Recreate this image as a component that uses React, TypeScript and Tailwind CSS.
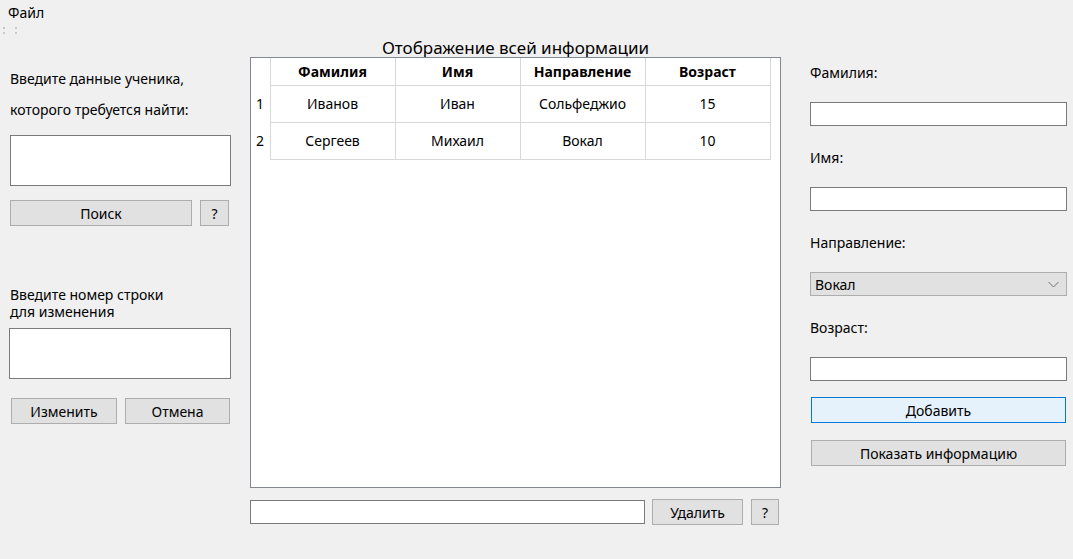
import React from "react";

const font = { fontFamily: '"Noto Sans", "Open Sans", sans-serif' };

const rows = [
  { id: 1, last: "Иванов", first: "Иван", dir: "Сольфеджио", age: "15" },
  { id: 2, last: "Сергеев", first: "Михаил", dir: "Вокал", age: "10" },
];

const Btn = ({ children, className = "" }: { children: React.ReactNode; className?: string }) => (
  <div
    className={`h-[26px] flex items-center justify-center bg-[#e1e1e1] border border-[#adadad] text-[14px] text-black ${className}`}
  >
    {children}
  </div>
);

const Field = ({ className = "" }: { className?: string }) => (
  <div className={`bg-white border border-[#7a7a7a] ${className}`} />
);

const App = () => {
  return (
    <div className="w-[1073px] h-[559px] bg-[#f0f0f0] text-black overflow-hidden" style={font}>
      {/* Menu bar */}
      <div className="h-[22px] pl-[8px] pt-[4px] text-[14px] leading-[18px]">Файл</div>

      {/* Toolbar grip */}
      <div className="h-[16px] flex gap-[10px] pl-[3px] pt-[5px]">
        <div className="flex flex-col gap-[3px]">
          <div className="w-[2px] h-[2px] bg-[#c8c8c8]" />
          <div className="w-[2px] h-[2px] bg-[#c8c8c8]" />
        </div>
        <div className="flex flex-col gap-[3px]">
          <div className="w-[2px] h-[2px] bg-[#c8c8c8]" />
          <div className="w-[2px] h-[2px] bg-[#c8c8c8]" />
        </div>
      </div>

      {/* Main area */}
      <div className="flex items-start pl-[10px]">
        {/* Left column: search & edit */}
        <div className="w-[221px] flex flex-col pt-[25px] text-[14px]">
          <div className="leading-[31px]">
            <div>Введите данные ученика,</div>
            <div>которого требуется найти:</div>
          </div>
          <Field className="mt-[10px] h-[51px]" />
          <div className="mt-[14px] flex gap-[8px]">
            <Btn className="w-[182px]">Поиск</Btn>
            <Btn className="w-[29px]">?</Btn>
          </div>
          <div className="mt-[60px] leading-[17px]">
            <div>Введите номер строки</div>
            <div>для изменения</div>
          </div>
          <Field className="mt-[8px] h-[51px] -ml-[1px]" />
          <div className="mt-[19px] flex gap-[8px] pl-[1px]">
            <Btn className="w-[106px]">Изменить</Btn>
            <Btn className="w-[105px]">Отмена</Btn>
          </div>
        </div>

        {/* Center: table */}
        <div className="ml-[19px] w-[531px] flex flex-col">
          <div className="h-[19px] text-[17px] leading-[19px] text-center">Отображение всей информации</div>
          <div className="h-[431px] bg-white border border-[#828790]">
            <table className="border-collapse text-[14px]">
              <thead>
                <tr className="h-[27px]">
                  <th className="w-[19px]" />
                  {["Фамилия", "Имя", "Направление", "Возраст"].map((h) => (
                    <th
                      key={h}
                      className="w-[125px] font-bold border-x border-[#d8d8d8] text-center"
                    >
                      {h}
                    </th>
                  ))}
                </tr>
              </thead>
              <tbody>
                {rows.map((r) => (
                  <tr key={r.id} className="h-[37px]">
                    <td className="w-[19px] pl-[5px]">{r.id}</td>
                    {[r.last, r.first, r.dir, r.age].map((v, i) => (
                      <td key={i} className="border border-[#d8d8d8] text-center">
                        {v}
                      </td>
                    ))}
                  </tr>
                ))}
              </tbody>
            </table>
          </div>
          <div className="mt-[11px] flex items-center">
            <Field className="w-[395px] h-[24px]" />
            <Btn className="ml-[7px] w-[91px]">Удалить</Btn>
            <Btn className="ml-[8px] w-[28px]">?</Btn>
          </div>
        </div>

        {/* Right column: add form */}
        <div className="ml-[29px] w-[257px] flex flex-col pt-[25px] text-[14px]">
          <div className="leading-[20px]">Фамилия:</div>
          <Field className="mt-[19px] h-[24px]" />
          <div className="mt-[22px] leading-[20px]">Имя:</div>
          <Field className="mt-[19px] h-[24px]" />
          <div className="mt-[22px] leading-[20px]">Направление:</div>
          <div className="mt-[19px] h-[24px] bg-[#e1e1e1] border border-[#adadad] flex items-center justify-between pl-[4px] pr-[7px]">
            <span>Вокал</span>
            <svg width="11" height="7" viewBox="0 0 11 7">
              <path d="M0.5 1 L5.5 6 L10.5 1" fill="none" stroke="#707070" strokeWidth="1" />
            </svg>
          </div>
          <div className="mt-[22px] leading-[20px]">Возраст:</div>
          <Field className="mt-[19px] h-[24px]" />
          <div className="mt-[16px] mx-[1px] h-[26px] flex items-center justify-center bg-[#e5f1fb] border border-[#0078d7]">
            Добавить
          </div>
          <Btn className="mt-[17px] mx-[1px]">Показать информацию</Btn>
        </div>
      </div>
    </div>
  );
};

export default App;
